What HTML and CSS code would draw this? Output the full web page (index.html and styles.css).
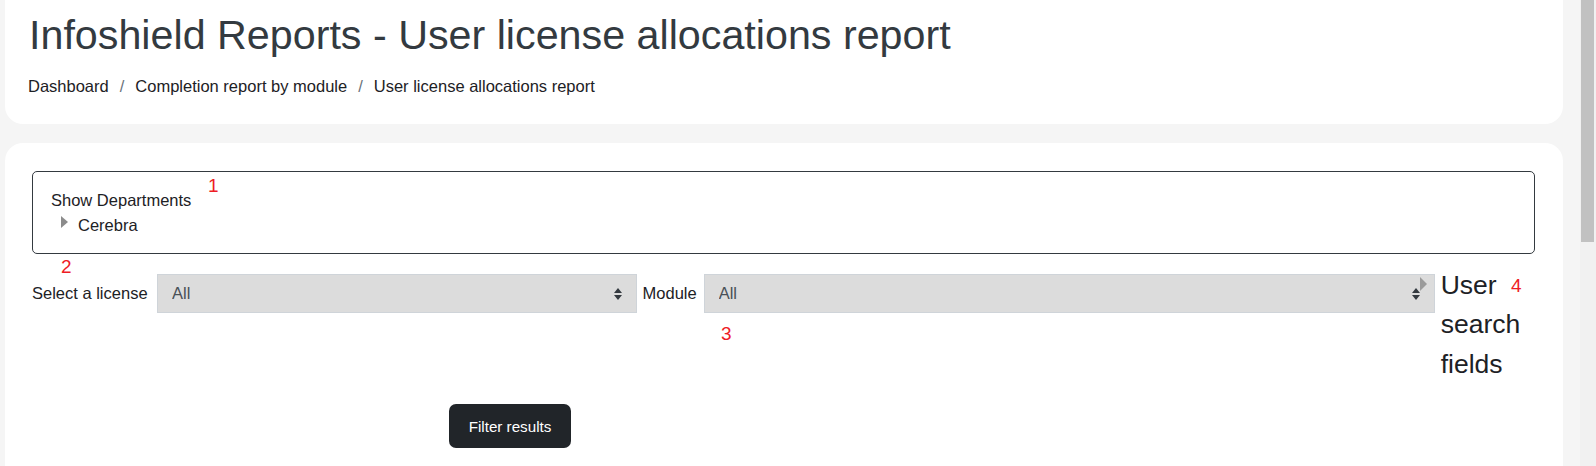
FILE: index.html
```html
<!DOCTYPE html>
<html lang="en">
<head>
<meta charset="utf-8">
<title>Infoshield Reports - User license allocations report</title>
<link rel="stylesheet" href="styles.css">
</head>
<body>
<div class="page">
  <header class="card header-card">
    <h1 class="page-title">Infoshield Reports - User license allocations report</h1>
    <nav class="breadcrumb">
      <a href="#">Dashboard</a>
      <span class="sep">/</span>
      <a href="#">Completion report by module</a>
      <span class="sep">/</span>
      <span>User license allocations report</span>
    </nav>
  </header>

  <main class="card main-card">
    <fieldset class="dept-box">
      <div class="dept-title">Show Departments</div>
      <div class="tree-item">
        <svg class="tree-caret" width="7" height="12" viewBox="0 0 7 12"><path d="M0 0 L7 6 L0 12 Z" fill="#8c8c8c"/></svg>
        <span>Cerebra</span>
      </div>
    </fieldset>

    <div class="filter-row">
      <label class="field-label" for="lic">Select a license</label>
      <div class="select-wrap lic-wrap">
        <select id="lic" class="select"><option>All</option></select>
        <svg class="sel-arrows" width="8" height="12" viewBox="0 0 8 12"><path d="M0 5 L4 0 L8 5 Z M0 7 L8 7 L4 12 Z" fill="#343a40"/></svg>
      </div>
      <label class="field-label module-label" for="mod">Module</label>
      <div class="select-wrap mod-wrap">
        <select id="mod" class="select"><option>All</option></select>
        <svg class="sel-arrows" width="8" height="12" viewBox="0 0 8 12"><path d="M0 5 L4 0 L8 5 Z M0 7 L8 7 L4 12 Z" fill="#343a40"/></svg>
      </div>
      <div class="user-fields">User search fields</div>
    </div>

    <div class="actions">
      <button class="btn-filter" type="button">Filter results</button>
    </div>

    <svg class="stray-caret" width="7" height="14" viewBox="0 0 7 14"><path d="M0 0 L7 7 L0 14 Z" fill="#9a9a9a"/></svg>
    <span class="note note-1">1</span>
    <span class="note note-2">2</span>
    <span class="note note-3">3</span>
    <span class="note note-4">4</span>
  </main>
</div>
<div class="scrollbar"><div class="thumb"></div></div>
</body>
</html>
```

FILE: styles.css
```css
html, body {
  margin: 0;
  padding: 0;
}
body {
  width: 1596px;
  height: 466px;
  overflow: hidden;
  display: flex;
  background: #f5f5f5;
  font-family: "Liberation Sans", Arial, sans-serif;
  font-size: 16.5px;
  line-height: 1.5;
  color: #1d2125;
}
.page {
  flex: 1;
  padding: 0 17px 0 5px;
  min-width: 0;
}
.card {
  background: #fff;
}
.header-card {
  height: 124px;
  box-sizing: border-box;
  border-radius: 0 0 18px 18px;
  padding: 11px 22px 0 23px;
}
.page-title {
  margin: 0 0 0 1px;
  font-weight: 400;
  font-size: 41.25px;
  line-height: 1.2;
  color: #333a40;
}
.breadcrumb {
  display: flex;
  align-items: center;
  margin-top: 13px;
  font-size: 16.5px;
}
.breadcrumb a {
  color: #1d2125;
  text-decoration: none;
}
.breadcrumb .sep {
  color: #6a737b;
  padding: 0 11px 0 11px;
}
.main-card {
  position: relative;
  margin-top: 19px;
  height: 400px;
  border-radius: 18px 18px 0 0;
  padding: 28px 28px 0 27px;
}
.dept-box {
  margin: 0;
  border: 1px solid #343a40;
  border-radius: 5px;
  padding: 16px 17px 15px 18px;
  min-width: 0;
}
.dept-title {
  line-height: 24.75px;
}
.tree-item {
  display: flex;
  align-items: center;
  line-height: 24.75px;
  padding-left: 10px;
}
.tree-caret {
  margin: -6px 10px 0 0;
}
.filter-row {
  display: flex;
  align-items: flex-start;
  margin-top: 12px;
}
.field-label {
  margin-top: 8px;
  height: 39.5px;
  display: flex;
  align-items: center;
  margin-right: 9.5px;
}
.module-label {
  margin-left: 6px;
  margin-right: 7px;
}
.select-wrap {
  position: relative;
  margin-top: 8px;
}
.lic-wrap { width: 479.5px; }
.mod-wrap { width: 731px; }
.select {
  appearance: none;
  -webkit-appearance: none;
  width: 100%;
  height: 39.5px;
  box-sizing: border-box;
  margin: 0;
  border: 1px solid #cfd4d9;
  border-radius: 0;
  background: #dcdcdc;
  padding: 0 30px 0 14px;
  font-family: "Liberation Sans", Arial, sans-serif;
  font-size: 16.5px;
  color: #495057;
}
.sel-arrows {
  position: absolute;
  right: 15px;
  top: 14px;
  pointer-events: none;
}
.user-fields {
  margin-left: 6px;
  width: 80px;
  font-size: 26.5px;
  line-height: 39.5px;
  color: #1d2125;
}
.actions {
  padding-left: 417px;
  margin-top: 20px;
}
.btn-filter {
  width: 122px;
  height: 44px;
  border: 0;
  border-radius: 7px;
  background: #212529;
  color: #fff;
  font-family: "Liberation Sans", Arial, sans-serif;
  font-size: 15.2px;
  padding: 0;
}
.stray-caret {
  position: absolute;
  left: 1415px;
  top: 134px;
}
.note {
  position: absolute;
  font-family: "Liberation Sans", Arial, sans-serif;
  font-size: 19px;
  line-height: 19px;
  color: #ee1c25;
}
.note-1 { left: 203px; top: 33px; }
.note-2 { left: 56px; top: 114px; }
.note-3 { left: 716px; top: 181px; }
.note-4 { left: 1506px; top: 133px; }
.scrollbar {
  width: 16px;
  flex: none;
  background: #f1f1f1;
}
.thumb {
  margin-left: 1px;
  width: 13px;
  height: 242px;
  background: #c1c1c1;
}
```
